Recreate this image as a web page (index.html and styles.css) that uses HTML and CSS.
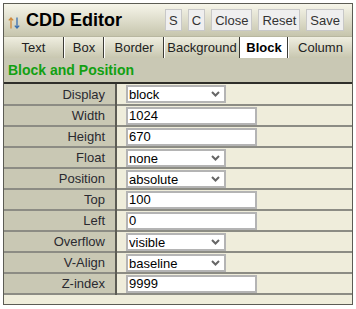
FILE: index.html
```html
<!DOCTYPE html>
<html lang="en">
<head>
    <meta charset="UTF-8">
    <title>CDD Editor</title>
    <link rel="stylesheet" href="styles.css">
</head>
<body>

    <div class="editor">
        <div class="editor__title">
            <svg class="arrows" width="12" height="12" viewBox="0 0 12 12">
                <path d="M3 11.5V1M0.8 3.4L3 1l2.2 2.4" fill="none" stroke="#d08a3c" stroke-width="1.3"/>
                <path d="M9 0.5V11M6.8 8.6L9 11l2.2-2.4" fill="none" stroke="#3a6fb0" stroke-width="1.3"/>
            </svg>
            <h1>CDD Editor</h1>
            <div class="buttons">
                <button>S</button>
                <button>C</button>
                <button>Close</button>
                <button>Reset</button>
                <button>Save</button>
            </div>
        </div>

        <ul class="tabs">
            <li>Text</li>
            <li>Box</li>
            <li>Border</li>
            <li>Background</li>
            <li class="active">Block</li>
            <li>Column</li>
        </ul>

        <h2 class="section">Block and Position</h2>

        <table class="props">
            <tr>
                <th>Display</th>
                <td><select><option>block</option></select></td>
            </tr>
            <tr>
                <th>Width</th>
                <td><input type="text" value="1024"></td>
            </tr>
            <tr>
                <th>Height</th>
                <td><input type="text" value="670"></td>
            </tr>
            <tr>
                <th>Float</th>
                <td><select><option>none</option></select></td>
            </tr>
            <tr>
                <th>Position</th>
                <td><select><option>absolute</option></select></td>
            </tr>
            <tr>
                <th>Top</th>
                <td><input type="text" value="100"></td>
            </tr>
            <tr>
                <th>Left</th>
                <td><input type="text" value="0"></td>
            </tr>
            <tr>
                <th>Overflow</th>
                <td><select><option>visible</option></select></td>
            </tr>
            <tr>
                <th>V-Align</th>
                <td><select><option>baseline</option></select></td>
            </tr>
            <tr>
                <th>Z-index</th>
                <td><input type="text" value="9999"></td>
            </tr>
        </table>

        <div class="footer"></div>
    </div>

</body>
</html>
```

FILE: styles.css
```css
* {
    margin: 0;
    box-sizing: border-box;
}
body {
    padding: 3px;
    font-family: "Liberation Sans", Arial, sans-serif;
    font-size: 13px;
    background: #fff;
}
.editor {
    width: 350px;
    border: 1px solid #5c5c54;
    background: #efeddb;
}
.editor__title {
    display: flex;
    align-items: center;
    height: 32px;
    padding-left: 4px;
    background: linear-gradient(#f6f5ea, #c6c5ad);
}
.arrows {
    margin-top: 6px;
}
h1 {
    font-size: 18px;
    margin-left: 6px;
    color: #000;
}
.buttons {
    display: flex;
    gap: 6px;
    margin-left: auto;
    margin-right: 8px;
}
.buttons button {
    height: 22px;
    padding: 0 3px;
    font-family: inherit;
    font-size: 13px;
    color: #333;
    background: #efefef;
    border: 1px solid #c8c8c8;
}
.tabs {
    display: grid;
    grid-template-columns: 60px 40px 60px 76px 48px 1fr;
    padding: 0;
    list-style: none;
    height: 22px;
    background: linear-gradient(#efeee0, #c8c7b0);
    border-top: 1px solid #b8b7a0;
}
.tabs li {
    text-align: center;
    line-height: 21px;
    color: #222;
    border-left: 1px solid #fff;
    border-right: 1px solid #3c3c36;
}
.tabs li:first-child {
    border-left: 0;
}
.tabs li:last-child {
    border-right: 0;
}
.tabs li.active {
    background: #fff;
    font-weight: bold;
    color: #000;
}
.section {
    height: 26px;
    padding: 4px 0 0 4px;
    font-size: 14px;
    color: #12a012;
    background: #c9c8b4;
    border-bottom: 2px solid #2f2f2a;
}
.props {
    width: 100%;
    border-collapse: collapse;
}
.props tr {
    height: 21px;
    border-bottom: 2px solid #8c8c84;
}
.props th {
    width: 112px;
    padding: 0 10px 0 0;
    text-align: right;
    font-weight: normal;
    color: #2a2a30;
    background: #c9c8b4;
    border-right: 2px solid #5c5c54;
}
.props td {
    padding: 0 0 0 9px;
}
.props select,
.props input {
    display: block;
    height: 18px;
    font-family: inherit;
    font-size: 13px;
    color: #000;
    background-color: #fff;
    border: 2px solid #b4b4b4;
    border-radius: 0;
    outline: none;
}
.props select {
    width: 100px;
    padding: 0 14px 0 1px;
    appearance: none;
    -webkit-appearance: none;
    background-image: url("data:image/svg+xml,%3Csvg xmlns='http://www.w3.org/2000/svg' width='9' height='6'%3E%3Cpath d='M1 1l3.5 3.5L8 1' fill='none' stroke='%23666' stroke-width='2'/%3E%3C/svg%3E");
    background-repeat: no-repeat;
    background-position: right 4px center;
}
.props input {
    width: 131px;
    padding: 0 1px;
}
.footer {
    height: 9px;
}
```
